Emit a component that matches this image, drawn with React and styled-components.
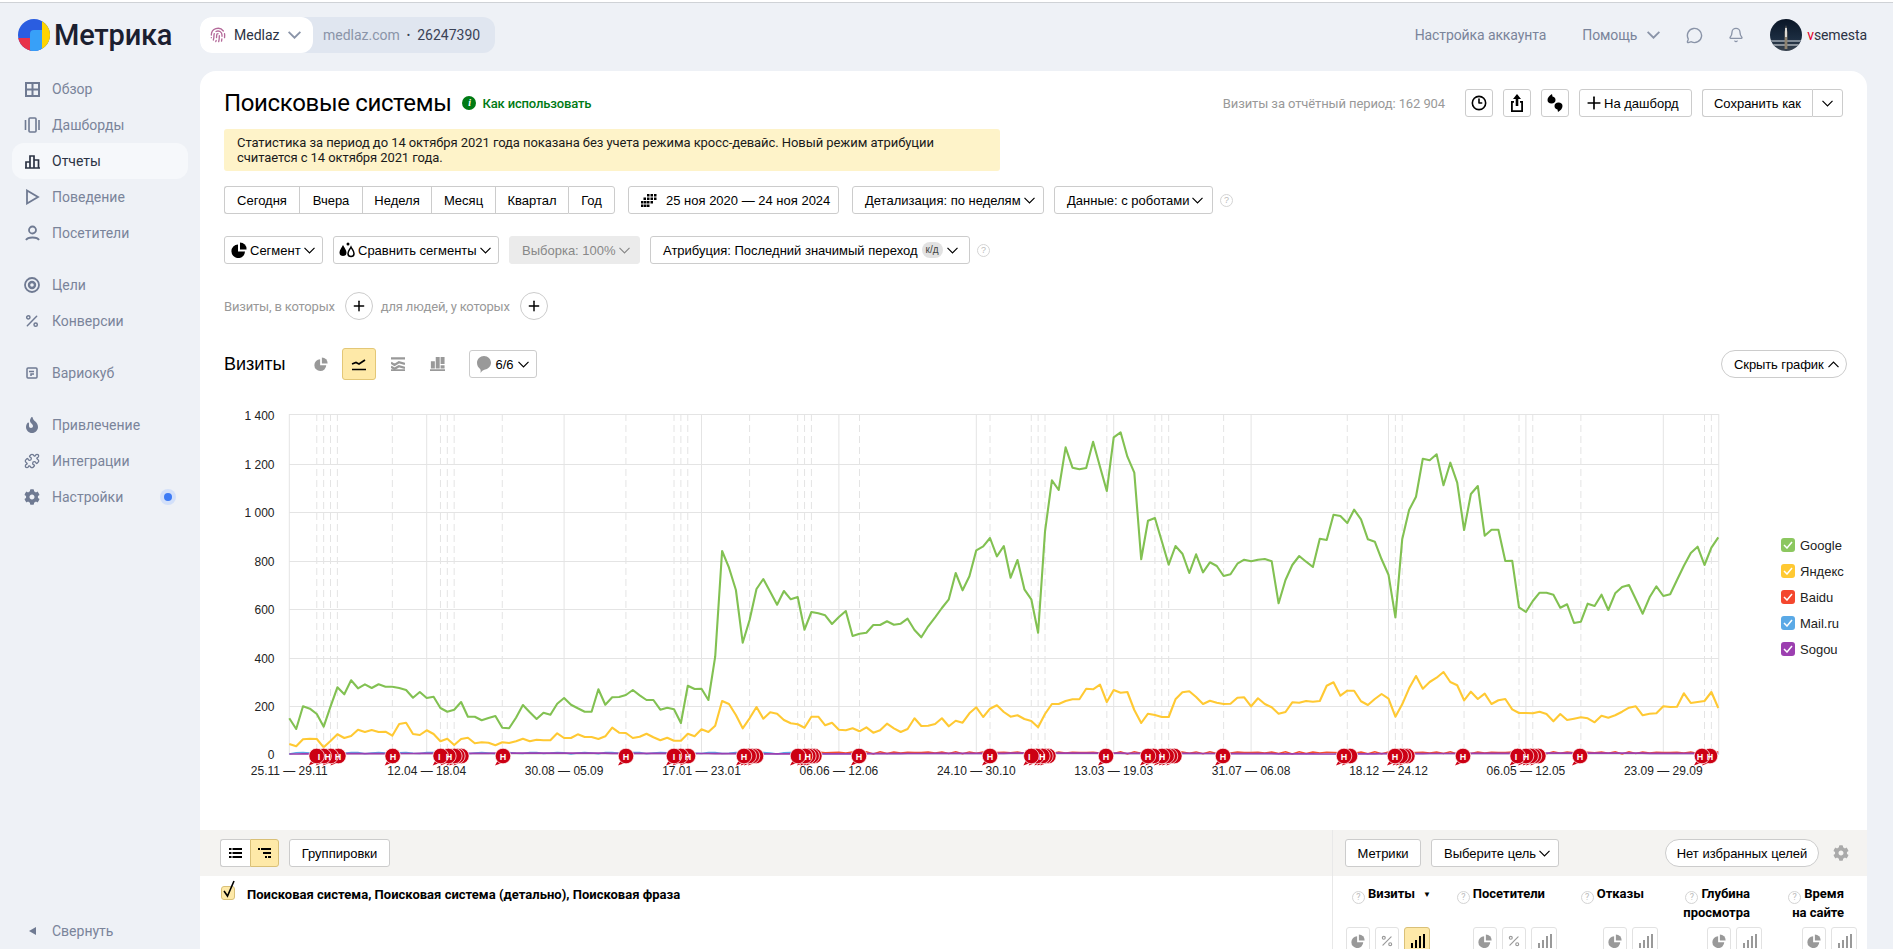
import React from 'react';
import styled, { createGlobalStyle } from 'styled-components';
import { Bell, Clock3, Fingerprint, MessageCircle, Percent, Plus, Puzzle } from 'lucide-react';
import { FaCog, FaFire } from 'react-icons/fa';

const Global = createGlobalStyle`
  html, body { margin: 0; padding: 0; height: 100%; overflow: hidden; background: #eef1f6; }
  body { font-family: "Liberation Sans", Arial, sans-serif; font-size: 13px; color: #000; }
  * { box-sizing: border-box; }
`;

const TEXT_FONT = '"Roboto", "Liberation Sans", sans-serif';

// series traced from the chart, in thirds of a pixel from the top of the svg
const GOOGLE = [955,987,919,926,942,980,920,862,883,841,865,853,864,853,860,860,864,870,893,876,894,890,924,935,929,906,950,950,961,954,948,983,985,953,915,937,957,938,944,911,894,914,925,935,935,868,914,892,891,885,870,886,900,900,929,923,928,969,857,867,866,900,770,453,503,570,728,660,567,537,575,614,573,598,591,689,636,640,646,672,651,633,708,701,698,675,675,664,674,671,656,690,712,679,652,624,598,519,571,529,451,439,414,469,438,533,480,568,598,698,395,241,270,142,203,208,204,125,200,273,112,97,170,218,478,362,354,424,494,438,461,519,463,517,487,498,528,523,491,479,484,479,477,484,610,540,495,468,485,501,416,420,344,348,369,329,358,418,425,478,524,652,418,330,290,176,181,163,256,188,248,390,282,258,407,389,389,483,482,622,636,603,578,578,584,623,613,669,665,611,618,584,630,580,561,555,598,641,592,559,588,583,540,497,459,440,495,443,412];
const YANDEX = [1032,1039,1018,1016,1017,1042,1023,1003,1014,1008,989,996,990,996,995,1007,972,968,1002,1005,991,1002,1024,1016,1035,1017,1013,1030,1027,1028,1036,1027,1029,1024,1016,1024,1019,1021,1021,1000,1014,1014,1003,1011,1011,1017,1009,983,998,999,1014,1010,1001,1012,1021,1013,1022,1022,1001,1009,988,996,977,903,912,945,985,955,921,956,937,941,960,970,973,983,950,950,976,968,989,991,985,994,982,998,991,971,985,996,987,955,978,977,972,955,979,962,968,940,922,951,926,916,936,950,946,957,963,982,942,912,912,903,898,898,866,868,854,906,870,878,876,930,969,941,945,951,951,898,877,874,891,912,902,908,912,911,893,892,919,895,912,922,941,936,907,908,903,905,903,857,847,887,872,872,904,915,897,882,896,950,913,865,828,866,846,833,816,846,856,901,875,897,881,912,901,897,928,939,939,940,935,942,964,942,960,956,952,955,967,947,953,946,935,923,919,946,941,940,919,921,920,880,909,906,903,876,924];

const POINTS = 209;
const px = i => 65.3 + 6.87 * i;
const toPoints = arr => arr.map((v, i) => `${px(i).toFixed(1)},${(v / 3).toFixed(1)}`).join(' ');

const noisePoints = (from, to, k, amp) => {
  const pts = [];
  for (let i = from; i < to; i++) {
    pts.push(`${px(i).toFixed(1)},${(354 - Math.abs(Math.sin(i * k)) * amp).toFixed(1)}`);
  }
  return pts.join(' ');
};

const GRID_Y = [
  [14.5, '1\u00a0400', 5], [64.5, '1\u00a0200', 4], [112.5, '1\u00a0000', 4], [161.5, '800', 4],
  [209.5, '600', 4], [258.5, '400', 4], [306.5, '200', 4], [354.5, '0', 4],
];

const X_LABELS = ['25.11 — 29.11', '12.04 — 18.04', '30.08 — 05.09', '17.01 — 23.01', '06.06 — 12.06', '24.10 — 30.10', '13.03 — 19.03', '31.07 — 06.08', '18.12 — 24.12', '06.05 — 12.05', '23.09 — 29.09'];

const DASHES = [4,5,6,7,15,22,23,24,31,49,56,57,58,67,74,75,76,83,102,108,109,110,119,126,127,128,136,154,161,162,171,179,181,188,206,207];

// marker clusters: bubble centres and the letters that stay visible
const MARKS = [
  { off: 46, at: [140, 161, 182, 205], text: [[147, 'I'], [173, 'Н'], [204, 'Н']] },
  { off: 46, at: [368], text: [[369, 'Н']] },
  { off: 46, at: [512, 535, 553, 562, 574], text: [[508, 'I'], [537, 'Н']] },
  { off: 46, at: [699], text: [[699, 'Н']] },
  { off: 46, at: [1068], text: [[1068, 'Н']] },
  { off: 46, at: [1212, 1232, 1254], text: [[1212, 'I'], [1230, 'I'], [1254, 'Н']] },
  { off: 46, at: [1422, 1436, 1446, 1458], text: [[1422, 'Н']] },
  { off: 546, at: [84, 105, 115, 125, 133], text: [[90, 'I'], [113, 'Н']] },
  { off: 546, at: [267], text: [[267, 'Н']] },
  { off: 546, at: [660], text: [[660, 'Н']] },
  { off: 546, at: [784, 800, 817, 826, 835], text: [[778, 'I'], [817, 'Н']] },
  { off: 546, at: [1008], text: [[1008, 'Н']] },
  { off: 546, at: [1134, 1150, 1176, 1190, 1200, 1213], text: [[1134, 'Н'], [1176, 'Н']] },
  { off: 546, at: [1359], text: [[1359, 'Н']] },
  { off: 1046, at: [222, 240], text: [[222, 'Н']] },
  { off: 1046, at: [375, 392, 402, 412], text: [[375, 'Н']] },
  { off: 1046, at: [579], text: [[579, 'Н']] },
  { off: 1046, at: [743, 768, 782, 792, 805], text: [[738, 'I'], [768, 'Н']] },
  { off: 1046, at: [930], text: [[930, 'Н']] },
  { off: 1046, at: [1296, 1320], text: [[1290, 'Н'], [1320, 'Н']] },
];

const Page = styled.div`
  width: 1893px;
  height: 949px;
  overflow: hidden;
  display: flex;
  flex-direction: column;
`;

const TopEdge = styled.div`
  height: 3px;
  flex: none;
  background: #fff;
  border-bottom: 1px solid #cfd2d6;
`;

const Header = styled.header`
  height: 68px;
  flex: none;
  display: flex;
  align-items: center;
  padding-bottom: 4px;
  padding-right: 26px;
`;

const Brand = styled.div`
  width: 200px;
  flex: none;
  display: flex;
  align-items: center;
  gap: 4px;
  padding-left: 18px;
`;

const BrandName = styled.span`
  font-size: 29px;
  font-weight: 500;
  letter-spacing: -0.2px;
  color: #1b2030;
  font-family: ${TEXT_FONT};
`;

const CounterPill = styled.div`
  width: 295px;
  height: 36px;
  border-radius: 12px;
  background: #e0e6f0;
  display: flex;
  align-items: center;
  font-family: ${TEXT_FONT};
  font-size: 14px;
`;

const CounterName = styled.div`
  width: 113px;
  height: 36px;
  background: #fff;
  border-radius: 12px;
  display: flex;
  align-items: center;
  gap: 8px;
  padding-left: 10px;
  color: #2c3344;
`;

const CounterSite = styled.span`
  margin-left: 10px;
  color: #8a94a8;
`;

const CounterId = styled.span`
  color: #3a4256;
  &::before {
    content: '•';
    margin: 0 7px;
    font-size: 10px;
    vertical-align: 1px;
  }
`;

const TopLinks = styled.div`
  margin-left: auto;
  display: flex;
  align-items: center;
  font-family: ${TEXT_FONT};
  font-size: 14px;
  letter-spacing: -0.1px;
  color: #7a849a;
`;

const TopLink = styled.span`
  margin-right: ${p => p.$gap || 0}px;
  display: inline-flex;
  align-items: center;
  gap: ${p => p.$inner || 0}px;
`;

const UserName = styled.span`
  margin-left: 5px;
  color: #2c3344;
  b { color: #e4002b; font-weight: 400; }
`;

const Body = styled.div`
  flex: 1;
  min-height: 0;
  display: flex;
`;

const Side = styled.nav`
  width: 200px;
  flex: none;
  padding: 0 12px;
  display: flex;
  flex-direction: column;
  gap: 16px;
`;

const NavGroup = styled.div`
  display: flex;
  flex-direction: column;
`;

const NavItem = styled.div`
  height: 36px;
  display: flex;
  align-items: center;
  gap: 12px;
  padding-left: 12px;
  border-radius: 12px;
  font-family: ${TEXT_FONT};
  font-size: 14px;
  color: ${p => (p.$active ? '#2c3344' : '#7a849a')};
  background: ${p => (p.$active ? '#f6f8fb' : 'transparent')};
`;

const NavIcon = styled.span`
  width: 16px;
  height: 16px;
  flex: none;
  display: flex;
  align-items: center;
  justify-content: center;
`;

const NewDot = styled.span`
  margin-left: auto;
  margin-right: 12px;
  width: 16px;
  height: 16px;
  border-radius: 50%;
  background: #d3e0f9;
  display: flex;
  align-items: center;
  justify-content: center;
  &::after {
    content: '';
    width: 8px;
    height: 8px;
    border-radius: 50%;
    background: #3d7bf5;
  }
`;

const Collapse = styled(NavGroup)`
  margin-top: auto;
`;

const Panel = styled.main`
  flex: 1;
  min-width: 0;
  margin-right: 26px;
  background: #fff;
  border-radius: 16px 16px 0 0;
  overflow: hidden;
`;

const Content = styled.div`
  padding: 18px 20px 0 24px;
`;

const TitleRow = styled.div`
  height: 28px;
  display: flex;
  align-items: center;
  padding-right: 4px;
`;

const Title = styled.h1`
  margin: 0;
  font-size: 24px;
  font-weight: 400;
  line-height: 28px;
  letter-spacing: -0.35px;
  font-family: ${TEXT_FONT};
  color: #000;
`;

const HowTo = styled.span`
  margin-left: 11px;
  display: inline-flex;
  align-items: center;
  gap: 6px;
  font-family: ${TEXT_FONT};
  font-size: 13px;
  font-weight: 500;
  letter-spacing: -0.15px;
  color: #007a14;
`;

const InfoDot = styled.span`
  width: 14px;
  height: 14px;
  border-radius: 50%;
  background: #007a14;
  color: #fff;
  font: italic bold 10px/14px "Liberation Serif", serif;
  text-align: center;
`;

const TotalNote = styled.span`
  margin-left: auto;
  margin-right: 20px;
  font-family: ${TEXT_FONT};
  font-size: 13px;
  letter-spacing: -0.1px;
  color: #999;
`;

const Alert = styled.div`
  margin-top: 12px;
  width: 776px;
  height: 42px;
  padding: 6px 13px;
  background: #fef3c9;
  border-radius: 3px;
  font-family: ${TEXT_FONT};
  font-size: 13px;
  line-height: 15px;
  letter-spacing: -0.07px;
  color: #1a1a1a;
`;

const Row = styled.div`
  margin-top: ${p => p.$top}px;
  height: 28px;
  display: flex;
  align-items: center;
`;

const Btn = styled.button`
  height: 28px;
  width: ${p => (p.$w ? `${p.$w}px` : 'auto')};
  margin-right: ${p => p.$gap || 0}px;
  flex: none;
  display: inline-flex;
  align-items: center;
  justify-content: ${p => (p.$pad ? 'flex-start' : 'center')};
  gap: ${p => p.$inner ?? 4}px;
  padding: 0 0 0 ${p => p.$pad || 0}px;
  font-family: "Liberation Sans", Arial, sans-serif;
  font-size: 13px;
  color: #000;
  background: ${p => (p.$on ? '#fee9a8' : '#fff')};
  border: 1px solid ${p => (p.$on ? '#d9c078' : '#ccc')};
  border-radius: ${p => (p.$pill ? '14px' : '3px')};
`;

const DisabledBtn = styled(Btn)`
  background: #ebebeb;
  border-color: #ebebeb;
  color: #888;
`;

const HideChartBtn = styled(Btn)`
  margin-left: auto;
  letter-spacing: -0.1px;
`;

const Joined = styled.div`
  display: flex;
  margin-right: ${p => p.$gap || 0}px;
  ${Btn} {
    border-radius: 0;
    border-right-width: 0;
  }
  ${Btn}:first-child {
    border-radius: 3px 0 0 3px;
  }
  ${Btn}:last-child {
    border-radius: 0 3px 3px 0;
    border-right-width: 1px;
  }
`;

const Badge = styled.span`
  padding: 2px 4px;
  border-radius: 8px;
  background: #e2e2e2;
  color: #444;
  font-size: 10px;
  line-height: 12px;
`;

const Help = styled.span`
  width: 13px;
  height: 13px;
  flex: none;
  border: 1px solid #d4d4d4;
  border-radius: 50%;
  color: #bbb;
  font-size: 9px;
  line-height: 11px;
  text-align: center;
  font-weight: 400;
  display: inline-block;
`;

const FilterLabel = styled.span`
  margin-right: ${p => p.$gap}px;
  font-family: ${TEXT_FONT};
  font-size: 13px;
  letter-spacing: -0.18px;
  color: #999;
`;

const RoundAdd = styled.span`
  width: 28px;
  height: 28px;
  margin-right: ${p => p.$gap || 0}px;
  border: 1px solid #ccc;
  border-radius: 50%;
  display: flex;
  align-items: center;
  justify-content: center;
`;

const ChartBar = styled.div`
  margin-top: 28px;
  height: 32px;
  display: flex;
  align-items: center;
`;

const ChartTitle = styled.h2`
  margin: 0 27px 0 0;
  width: 62px;
  font-size: 18px;
  font-weight: 400;
`;

const ChartType = styled.span`
  width: ${p => p.$w || 34}px;
  height: 32px;
  margin-right: ${p => p.$gap || 0}px;
  display: flex;
  align-items: center;
  justify-content: center;
  border-radius: 3px;
  background: ${p => (p.$on ? '#fee9a8' : 'transparent')};
  border: 1px solid ${p => (p.$on ? '#e3c777' : 'transparent')};
`;

const ChartRow = styled.div`
  margin-top: 20px;
  height: 390px;
  display: flex;
`;

const Legend = styled.ul`
  list-style: none;
  margin: 0 0 0 57px;
  padding: 132px 0 0;
`;

const LegendItem = styled.li`
  height: 26px;
  display: flex;
  align-items: center;
  gap: 5px;
  font-size: 13px;
  color: #222;
`;

const LegendBox = styled.span`
  width: 14px;
  height: 14px;
  border-radius: 3px;
  background: ${p => p.$color};
  display: flex;
  align-items: center;
  justify-content: center;
`;

const AxisText = styled.text`
  font-family: "Liberation Sans", Arial, sans-serif;
  font-size: 12px;
  fill: #222;
`;

const MarkText = styled.text`
  font-family: "Liberation Sans", Arial, sans-serif;
  font-size: 9px;
  font-weight: 700;
  fill: #fff;
  text-anchor: middle;
`;

const TableBar = styled.div`
  margin-top: 40px;
  height: 46px;
  display: flex;
  background: #f4f3f1;
`;

const TableLeft = styled.div`
  width: 1132px;
  flex: none;
  display: flex;
  align-items: center;
  padding-left: 20px;
`;

const TableRight = styled.div`
  flex: 1;
  display: flex;
  align-items: center;
  padding-left: 12px;
  border-left: 1px solid #e8e8e8;
`;

const TableHead = styled.div`
  display: flex;
  height: 73px;
`;

const DimCell = styled.div`
  width: 1132px;
  flex: none;
  display: flex;
  align-items: flex-start;
  gap: 12px;
  padding: 10px 0 0 21px;
`;

const DimCheck = styled.span`
  position: relative;
  width: 14px;
  height: 14px;
  flex: none;
  background: #fee9a8;
  border: 1px solid #d9c078;
  border-radius: 3px;
  svg { position: absolute; left: 0; top: -7px; }
`;

const DimTitle = styled.span`
  font-family: ${TEXT_FONT};
  font-size: 13px;
  font-weight: 700;
  line-height: 18px;
  letter-spacing: 0.02px;
`;

const MetricCell = styled.div`
  flex: 1;
  display: flex;
  border-left: 1px solid #e8e8e8;
`;

const MetricCol = styled.div`
  width: ${p => p.$w}px;
  flex: none;
`;

const MetricHead = styled.div`
  height: 51px;
  padding: 9px ${p => p.$pr}px 0 0;
  text-align: right;
  font-family: ${TEXT_FONT};
  font-size: 13px;
  font-weight: 700;
  line-height: 18px;
  ${Help} { margin-right: 3px; vertical-align: -2px; }
`;

const SortMark = styled.span`
  margin-left: 8px;
  font-size: 8px;
  vertical-align: 1px;
`;

const MetricTools = styled.div`
  display: flex;
  justify-content: flex-end;
  gap: 5px;
  padding-right: 3px;
`;

const MetricTool = styled.span`
  width: ${p => p.$w || 24}px;
  height: 28px;
  flex: none;
  display: flex;
  align-items: center;
  justify-content: center;
  border-radius: 3px;
  background: ${p => (p.$on ? '#fee9a8' : '#fff')};
  border: 1px solid ${p => (p.$on ? '#d9c078' : '#e2e2e2')};
  color: ${p => (p.$on ? '#000' : '#999')};
`;

// wide thin chevron, lucide's one is too narrow for these buttons
const Caret = ({ w = 11, color = '#000', stroke = 1.2, up = false }) => (
  <svg width={w} height={Math.round(w * 0.6)} viewBox="0 0 11 6.600" fill="none" stroke={color} strokeWidth={stroke}>
    <path d={up ? 'M.5 6L5.500 1l5 5' : 'M.5 .6l5 5 5-5'} />
  </svg>
);

const Logo = () => (
  <svg width="32" height="32" viewBox="0 0 32 32">
    <defs>
      <clipPath id="logoClip"><circle cx="16" cy="16" r="16" /></clipPath>
    </defs>
    <g clipPath="url(#logoClip)">
      <rect width="32" height="32" fill="#2a5de0" />
      <rect y="19" width="13" height="13" fill="#e8324a" />
      <rect x="24" width="8" height="32" fill="#ffd400" />
      <path d="M12 32V15a4 4 0 0 1 4-4h8v21z" fill="#38a0f8" />
    </g>
  </svg>
);

const Avatar = () => (
  <svg width="32" height="32" viewBox="0 0 32 32">
    <defs>
      <clipPath id="avatarClip"><circle cx="16" cy="16" r="16" /></clipPath>
      <linearGradient id="avatarSky" x1="0" y1="0" x2="0" y2="1">
        <stop offset="0" stopColor="#0a1626" />
        <stop offset="0.6" stopColor="#1b2c40" />
        <stop offset="1" stopColor="#39434f" />
      </linearGradient>
    </defs>
    <g clipPath="url(#avatarClip)">
      <rect width="32" height="32" fill="url(#avatarSky)" />
      <rect y="21" width="32" height="2" fill="#7f8a96" />
      <rect y="25" width="32" height="2" fill="#8a929b" />
      <path d="M16 6l1.400 7v17h-2.800V13z" fill="#8d8270" />
      <rect x="15.300" y="9" width="1.400" height="9" fill="#fff" />
    </g>
  </svg>
);

const GridIcon = () => (
  <svg width="15" height="15" viewBox="0 0 15 15" fill="none" stroke="#6f7a92" strokeWidth="2">
    <rect x="1" y="1" width="13" height="13" />
    <path d="M7.500 1v13M1 7.500h13" />
  </svg>
);

const BoardsIcon = () => (
  <svg width="16" height="16" viewBox="0 0 16 16" fill="none" stroke="#6f7a92" strokeWidth="1.600">
    <rect x="5" y="1" width="7" height="14" rx="1" />
    <path d="M1.500 3v10M15 3v10" />
  </svg>
);

const ReportsIcon = () => (
  <svg width="15" height="15" viewBox="0 0 15 15" fill="none" stroke="#2c3344" strokeWidth="1.700">
    <path d="M1 14V8h4M5 14V2h4v12M9 14V6h4.500v8M0 14h15" />
  </svg>
);

const PlayIcon = () => (
  <svg width="15" height="16" viewBox="0 0 15 16" fill="none" stroke="#6f7a92" strokeWidth="1.800">
    <path d="M2 1.500v13L13 8z" />
  </svg>
);

const PersonIcon = () => (
  <svg width="15" height="16" viewBox="0 0 15 16" fill="none" stroke="#6f7a92" strokeWidth="1.800">
    <circle cx="7.500" cy="5" r="3.500" />
    <path d="M1 15c1-2 3-2.500 6.500-2.500S13 13 14 15" />
  </svg>
);

const TargetIcon = () => (
  <svg width="16" height="16" viewBox="0 0 16 16" fill="none" stroke="#6f7a92" strokeWidth="1.800">
    <circle cx="8" cy="8" r="7" />
    <circle cx="8" cy="8" r="3" strokeWidth="2.400" />
  </svg>
);

const CubeIcon = () => (
  <svg width="12" height="12" viewBox="0 0 12 12" fill="none" stroke="#6f7a92" strokeWidth="1.500">
    <rect x="1" y="1" width="10" height="10" rx="1" />
    <path d="M3 4.500h5M8 7H5v2" />
  </svg>
);

const PieIcon = ({ color = '#999', size = 16 }) => (
  <svg width={size} height={size} viewBox="0 0 16 16" fill={color}>
    <path d="M7 2.500A6.800 6.800 0 1 0 14 9.500H7z" />
    <path d="M9 0.500A6.500 6.500 0 0 1 15.500 7.500H9z" />
  </svg>
);

const DropsIcon = () => (
  <svg width="16" height="16" viewBox="0 0 16 16">
    <path d="M4 3c1.500 3 3.500 5 3.500 7.500a3.500 3.500 0 0 1-7 0C.5 8 2.500 6 4 3z" fill="#000" />
    <path d="M12 5c1.300 2.500 3 4 3 6.500a3 3 0 0 1-6 0C9 9 10.700 7.500 12 5z" fill="none" stroke="#000" strokeWidth="1.500" />
    <circle cx="9" cy="2" r="1.500" fill="#000" />
  </svg>
);

const CalendarIcon = () => (
  <svg width="16" height="13" viewBox="0 0 16 13" fill="#000">
    <path d="M6 0h2.500v2.500H6zM9.500 0H12v2.500H9.500zM13 0h2.500v2.500H13zM2.500 3.500H5V6H2.500zM6 3.500h2.500V6H6zM9.500 3.500H12V6H9.500zM13 3.500h2.500V6H13zM0 7h2.500v2.500H0zM3 7h2.500v2.500H3zM6 7h2.500v2.500H6zM9.500 7H12v2.500H9.500zM0 10.500h2.500V13H0zM3 10.500h2.500V13H3zM6 10.500h2.500V13H6z" />
  </svg>
);

const ShareIcon = () => (
  <svg width="14" height="18" viewBox="0 0 14 18" fill="#000">
    <path d="M7 0l4 5H8.300v7H5.700V5H3z" />
    <path d="M1 7h3v1.800H2.800v7.400h8.400V8.800H10V7h3v11H1z" />
  </svg>
);

const QuoteIcon = () => (
  <svg width="16" height="18" viewBox="0 0 16 18" fill="#000">
    <path d="M5 0l.5 2.500C7.500 3 8.500 4 8.500 6c0 2-1.500 3.500-4 3.500S.5 8 .5 6C.5 3.500 2.500 1.500 5 0z" />
    <path d="M11 18l-.5-2.500c-2-.5-3-1.500-3-3.500 0-2 1.500-3.500 4-3.500s4 1.500 4 3.500c0 2.500-2 4.500-4.500 6z" />
  </svg>
);

const LineChartIcon = () => (
  <svg width="16" height="14" viewBox="0 0 16 14" fill="none" stroke="#000" strokeWidth="1.700">
    <path d="M1 7l4-1.500 3 1.500 6-4M1 12.500h14" />
  </svg>
);

const StackIcon = () => (
  <svg width="16" height="16" viewBox="0 0 16 16" fill="none" stroke="#999" strokeWidth="2.600">
    <path d="M0 1.500h16M0 6.500l4 2.500 5-3 7 2M0 11l4 2.500 5-3 7 2" />
    <path d="M0 15h16" strokeWidth="2" />
  </svg>
);

const StackBarsIcon = () => (
  <svg width="17" height="16" viewBox="0 0 17 16" fill="#999">
    <path d="M1 5h4.500v8H1zM6.500 0H11v13H6.500zM12 0h4.500v8H12zM12 9.500h4.500V13H12zM0 14h17v2H0z" />
  </svg>
);

const BubbleIcon = () => (
  <svg width="14" height="17" viewBox="0 0 14 17" fill="#999">
    <path d="M7 0c3.900 0 7 3 7 6.800 0 3.500-2.700 6.200-6 6.800-1.500.3-3 1.500-4.500 3.400.3-1.500.3-3-.4-4C1.400 11.800 0 9.500 0 6.800 0 3 3.100 0 7 0z" />
  </svg>
);

const ListIcon = () => (
  <svg width="13" height="10" viewBox="0 0 13 10" fill="#000">
    <path d="M0 0h2.500v2H0zM3.500 0H13v2H3.500zM0 4h2.500v2H0zM3.500 4H13v2H3.500zM0 8h2.500v2H0zM3.500 8H13v2H3.500z" />
  </svg>
);

const TreeIcon = () => (
  <svg width="13" height="10" viewBox="0 0 13 10" fill="#000">
    <path d="M0 0h2v2H0zM3 0h10v2H3zM5 4h8v2H5zM7 8h2v2H7zM10 8h3v2h-3z" />
  </svg>
);

const BarsIcon = ({ color = '#999' }) => (
  <svg width="15" height="14" viewBox="0 0 15 14" fill={color}>
    <path d="M1 9h2v5H1zM5 6h2v8H5zM9 2h2v12H9zM13 0h2v14h-2z" />
  </svg>
);

const CheckMark = () => (
  <svg width="10" height="8" viewBox="0 0 10 8" fill="none" stroke="#fff" strokeWidth="1.500">
    <path d="M1 4l3 3 5-6" />
  </svg>
);

const Marker = ({ x }) => (
  <g>
    <path d={`M${x - 5} 360l-3 5.500 8-3z`} fill="#cc0014" />
    <circle cx={x} cy={356} r={7.8} fill="#cc0014" stroke="#fff" strokeWidth={0.7} />
  </g>
);

const VisitsChart = () => (
  <svg width="1500" height="390" viewBox="0 0 1500 390">
    {X_LABELS.map((label, k) => (
      <line key={label} x1={px(k * 20)} x2={px(k * 20)} y1={14} y2={355} stroke="#e4e4e4" />
    ))}
    <line x1={px(208) + 0.5} x2={px(208) + 0.5} y1={14} y2={355} stroke="#e4e4e4" />
    {GRID_Y.map(([y, label, shift]) => (
      <g key={label}>
        <line x1={65} x2={px(208) + 0.5} y1={y} y2={y} stroke="#e4e4e4" />
        <AxisText x={50.500} y={y + shift} textAnchor="end">{label}</AxisText>
      </g>
    ))}
    {DASHES.map(i => (
      <line key={i} x1={px(i)} x2={px(i)} y1={14} y2={355} stroke="#e4e4e4" strokeDasharray="7 4" />
    ))}
    <polyline points={toPoints(GOOGLE)} fill="none" stroke="#82c152" strokeWidth="2.100" strokeLinejoin="round" />
    <polyline points={toPoints(YANDEX)} fill="none" stroke="#ffc933" strokeWidth="2.100" strokeLinejoin="round" />
    <polyline points={noisePoints(0, 80, 2.300, 1.600)} fill="none" stroke="#5aa9e6" strokeWidth="1.500" />
    <polyline points={noisePoints(75, POINTS, 1.700, 2.200)} fill="none" stroke="#f4502e" strokeWidth="1.500" />
    <polyline points={noisePoints(0, POINTS, 3.100, 0.800)} fill="none" stroke="#9c3fb0" strokeWidth="1.700" />
    {MARKS.map(cluster => (
      <g key={`${cluster.off}-${cluster.at[0]}`}>
        {[...cluster.at].reverse().map(x => (
          <Marker key={x} x={x / 3 + cluster.off} />
        ))}
        {cluster.text.map(([x, letter]) => (
          <MarkText key={x} x={x / 3 + cluster.off} y={359.5}>{letter}</MarkText>
        ))}
      </g>
    ))}
    {X_LABELS.map((label, k) => (
      <AxisText key={label} x={px(k * 20)} y={375} textAnchor="middle">{label}</AxisText>
    ))}
  </svg>
);

const NAV_GROUPS = [
  [
    { label: 'Обзор', icon: <GridIcon /> },
    { label: 'Дашборды', icon: <BoardsIcon /> },
    { label: 'Отчеты', icon: <ReportsIcon />, active: true },
    { label: 'Поведение', icon: <PlayIcon /> },
    { label: 'Посетители', icon: <PersonIcon /> },
  ],
  [
    { label: 'Цели', icon: <TargetIcon /> },
    { label: 'Конверсии', icon: <Percent size={16} color="#6f7a92" strokeWidth={2.200} /> },
  ],
  [{ label: 'Вариокуб', icon: <CubeIcon /> }],
  [
    { label: 'Привлечение', icon: <FaFire size={16} color="#6f7a92" /> },
    { label: 'Интеграции', icon: <Puzzle size={16} color="#6f7a92" strokeWidth={2} /> },
    { label: 'Настройки', icon: <FaCog size={16} color="#6f7a92" />, dot: true },
  ],
];

const LEGEND = [
  ['Google', '#8cc75f'],
  ['Яндекс', '#ffc933'],
  ['Baidu', '#f4472e'],
  ['Mail.ru', '#5aa9e6'],
  ['Sogou', '#9c3fb0'],
];

const METRICS = [
  { lines: ['Визиты'], w: 100, pr: 2, sort: true, tools: ['pie', 'pct', 'bars-on'] },
  { lines: ['Посетители'], w: 127, pr: 15, tools: ['pie', 'pct', 'bars'] },
  { lines: ['Отказы'], w: 101, pr: 17, tools: ['pie', 'bars'] },
  { lines: ['Глубина', 'просмотра'], w: 104, pr: 15, tools: ['pie', 'bars'] },
  { lines: ['Время', 'на сайте'], w: 95, pr: 16, tools: ['pie', 'bars'] },
];

const ToolIcon = ({ kind }) => {
  if (kind === 'pie') return <MetricTool><PieIcon size={14} /></MetricTool>;
  if (kind === 'pct') return <MetricTool><Percent size={14} /></MetricTool>;
  if (kind === 'bars-on') return <MetricTool $on $w={26}><BarsIcon color="#000" /></MetricTool>;
  return <MetricTool $w={26}><BarsIcon /></MetricTool>;
};

const App = () => (
  <Page>
    <Global />
    <TopEdge />
    <Header>
      <Brand>
        <Logo />
        <BrandName>Метрика</BrandName>
      </Brand>
      <CounterPill>
        <CounterName>
          <Fingerprint size={16} color="#b46a9a" />
          Medlaz
          <Caret w={13} color="#8a94a8" stroke={1.6} />
        </CounterName>
        <CounterSite>medlaz.com</CounterSite>
        <CounterId>26247390</CounterId>
      </CounterPill>
      <TopLinks>
        <TopLink $gap={36}>Настройка аккаунта</TopLink>
        <TopLink $gap={26} $inner={10}>Помощь <Caret w={13} color="#8a94a8" stroke={1.6} /></TopLink>
        <TopLink $gap={25}><MessageCircle size={17} color="#8a94a8" /></TopLink>
        <TopLink $gap={26}><Bell size={16} color="#8a94a8" /></TopLink>
        <Avatar />
        <UserName><b>v</b>semesta</UserName>
      </TopLinks>
    </Header>
    <Body>
      <Side>
        {NAV_GROUPS.map(group => (
          <NavGroup key={group[0].label}>
            {group.map(item => (
              <NavItem key={item.label} $active={item.active}>
                <NavIcon>{item.icon}</NavIcon>
                {item.label}
                {item.dot && <NewDot />}
              </NavItem>
            ))}
          </NavGroup>
        ))}
        <Collapse>
          <NavItem>
            <NavIcon>
              <svg width="7" height="8" viewBox="0 0 7 8" fill="#6f7a92"><path d="M7 0v8L0 4z" /></svg>
            </NavIcon>
            Свернуть
          </NavItem>
        </Collapse>
      </Side>
      <Panel>
        <Content>
          <TitleRow>
            <Title>Поисковые системы</Title>
            <HowTo><InfoDot>i</InfoDot>Как использовать</HowTo>
            <TotalNote>Визиты за отчётный период: 162 904</TotalNote>
            <Btn $w={28} $gap={10}><Clock3 size={16} strokeWidth={2.400} /></Btn>
            <Btn $w={28} $gap={10}><ShareIcon /></Btn>
            <Btn $w={28} $gap={10}><QuoteIcon /></Btn>
            <Btn $w={113} $gap={10} $pad={4} $inner={0}><Plus size={20} strokeWidth={2} />На дашборд</Btn>
            <Joined>
              <Btn $w={110}>Сохранить как</Btn>
              <Btn $w={31}><Caret /></Btn>
            </Joined>
          </TitleRow>
          <Alert>
            Статистика за период до 14 октября 2021 года показана без учета режима кросс-девайс. Новый режим атрибуции
            <br />
            считается с 14 октября 2021 года.
          </Alert>
          <Row $top={15}>
            <Joined $gap={13}>
              <Btn $w={75}>Сегодня</Btn>
              <Btn $w={63}>Вчера</Btn>
              <Btn $w={69}>Неделя</Btn>
              <Btn $w={64}>Месяц</Btn>
              <Btn $w={73}>Квартал</Btn>
              <Btn $w={47}>Год</Btn>
            </Joined>
            <Btn $w={211} $gap={13} $pad={12} $inner={9}><CalendarIcon />25 ноя 2020 — 24 ноя 2024</Btn>
            <Btn $w={192} $gap={10} $pad={12} $inner={3}>Детализация: по неделям<Caret /></Btn>
            <Btn $w={159} $gap={7} $pad={12} $inner={3}>Данные: с роботами<Caret /></Btn>
            <Help>?</Help>
          </Row>
          <Row $top={22}>
            <Btn $w={99} $gap={10} $pad={6} $inner={3}><PieIcon color="#000" />Сегмент<Caret /></Btn>
            <Btn $w={166} $gap={10} $pad={5} $inner={3}><DropsIcon />Сравнить сегменты<Caret /></Btn>
            <DisabledBtn $w={131} $gap={10} $pad={12} $inner={3}>Выборка: 100%<Caret color="#888" /></DisabledBtn>
            <Btn $w={320} $gap={7} $pad={12} $inner={4}>Атрибуция: Последний значимый переход<Badge>к/д</Badge><Caret /></Btn>
            <Help>?</Help>
          </Row>
          <Row $top={28}>
            <FilterLabel $gap={10}>Визиты, в которых</FilterLabel>
            <RoundAdd $gap={8}><Plus size={16} strokeWidth={2.200} /></RoundAdd>
            <FilterLabel $gap={10}>для людей, у которых</FilterLabel>
            <RoundAdd><Plus size={16} strokeWidth={2.200} /></RoundAdd>
          </Row>
          <ChartBar>
            <ChartTitle>Визиты</ChartTitle>
            <ChartType $w={16} $gap={13}><PieIcon /></ChartType>
            <ChartType $on $gap={14}><LineChartIcon /></ChartType>
            <ChartType $w={16} $gap={23}><StackIcon /></ChartType>
            <ChartType $w={17} $gap={23}><StackBarsIcon /></ChartType>
            <Btn $w={68} $inner={4}><BubbleIcon />6/6<Caret /></Btn>
            <HideChartBtn $w={126} $pill $pad={12} $inner={4}>
              Скрыть график<Caret up />
            </HideChartBtn>
          </ChartBar>
          <ChartRow>
            <VisitsChart />
            <Legend>
              {LEGEND.map(([name, color]) => (
                <LegendItem key={name}>
                  <LegendBox $color={color}><CheckMark /></LegendBox>
                  {name}
                </LegendItem>
              ))}
            </Legend>
          </ChartRow>
        </Content>
        <TableBar>
          <TableLeft>
            <Joined $gap={10}>
              <Btn $w={30}><ListIcon /></Btn>
              <Btn $w={29} $on><TreeIcon /></Btn>
            </Joined>
            <Btn $w={101}>Группировки</Btn>
          </TableLeft>
          <TableRight>
            <Btn $w={76} $gap={10}>Метрики</Btn>
            <Btn $w={128} $gap={106} $pad={12} $inner={3}>Выберите цель<Caret /></Btn>
            <Btn $w={154} $pill $gap={14}>Нет избранных целей</Btn>
            <FaCog size={16} color="#aaa" />
          </TableRight>
        </TableBar>
        <TableHead>
          <DimCell>
            <DimCheck>
              <svg width="16" height="20" viewBox="0 0 16 20" fill="none" stroke="#000" strokeWidth="1.600">
                <path d="M2 11l3.500 5L12 1" />
              </svg>
            </DimCheck>
            <DimTitle>Поисковая система, Поисковая система (детально), Поисковая фраза</DimTitle>
          </DimCell>
          <MetricCell>
            {METRICS.map(metric => (
              <MetricCol key={metric.lines[0]} $w={metric.w}>
                <MetricHead $pr={metric.pr}>
                  <Help>?</Help>
                  {metric.lines[0]}
                  {metric.sort && <SortMark>▼</SortMark>}
                  {metric.lines[1] && <br />}
                  {metric.lines[1]}
                </MetricHead>
                <MetricTools>
                  {metric.tools.map(kind => <ToolIcon key={kind} kind={kind} />)}
                </MetricTools>
              </MetricCol>
            ))}
          </MetricCell>
        </TableHead>
      </Panel>
    </Body>
  </Page>
);

export default App;
